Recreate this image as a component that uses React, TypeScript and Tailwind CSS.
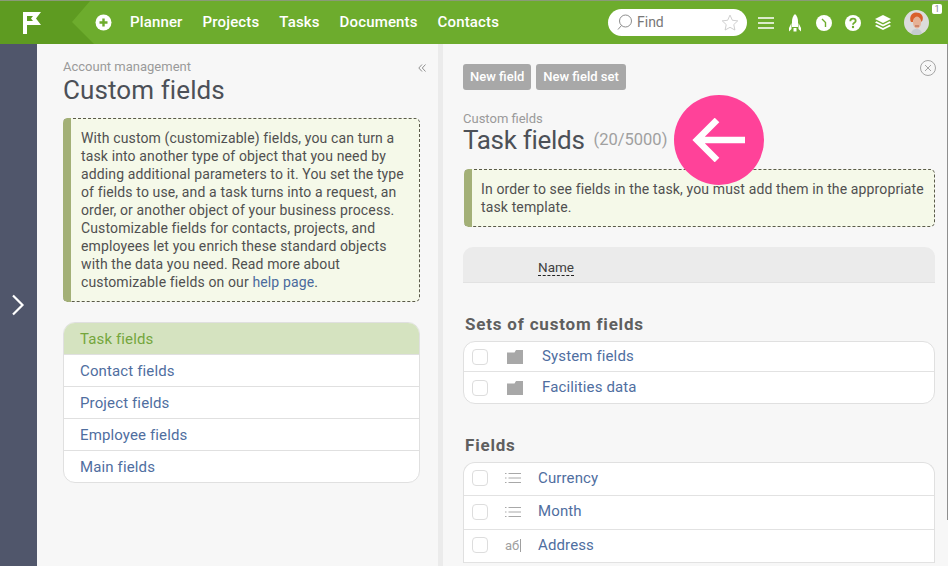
const F = "font-['Roboto',sans-serif]";

function Check() {
  return <span className="w-4 h-4 rounded-[4px] border border-[#dddddd] bg-white shrink-0" />;
}

function ListIcon() {
  return (
    <svg width="16" height="12" viewBox="0 0 16 12" className="shrink-0">
      <g stroke="#a8a8a8" strokeWidth="1" fill="none">
        <path d="M0 1.5h1.5M0 6h1.5M0 10.5h1.5" />
        <path d="M3.5 1.5H16M3.5 6H16M3.5 10.5H16" />
      </g>
    </svg>
  );
}

function FolderIcon() {
  return (
    <svg width="16" height="14" viewBox="0 0 16 14" className="shrink-0">
      <path d="M0 2.5 L0 14 L16 14 L16 0 L9 0 L7.5 2.5 Z" fill="#a8a8a8" />
    </svg>
  );
}

function Notice({ className, children }: { className: string; children: React.ReactNode }) {
  return (
    <div className={`relative rounded-[5px] border border-dashed border-[#5a5a4a] border-l-0 bg-[#f5f9e9] text-[#505050] text-[14px] leading-[18px] tracking-[0.13px] ${className}`}>
      <span className="absolute -left-0 -top-px -bottom-px w-2 rounded-l-[5px] bg-[#a3b077]" />
      {children}
    </div>
  );
}

function Nav() {
  return (
    <header className="h-11 shrink-0 flex items-center bg-[#6dac2d] border-t border-[#8a9a78] text-white relative">
      <div className="absolute left-0 top-0 h-full w-[94px] bg-[#5e9b21] [clip-path:polygon(0_0,90px_0,72px_21px,94px_100%,0_100%)]" />
      <div className="relative w-[94px] shrink-0 h-full flex items-center pl-[22px]">
        <svg width="20" height="24" viewBox="0 0 20 24">
          <path d="M1 1h18l-5 6.5 5 6.5H5v9H1z M5 5v5h6l-2-2.5L11 5z" fill="#fff" fillRule="evenodd" />
        </svg>
      </div>
      <svg width="17" height="17" viewBox="0 0 17 17" className="relative shrink-0 ml-[1px]">
        <circle cx="8.5" cy="8.5" r="8" fill="#fff" />
        <path d="M8.5 4.5v8M4.5 8.5h8" stroke="#6dac2d" strokeWidth="2.4" />
      </svg>
      <nav className="relative flex items-center gap-5 ml-[18px] text-[15px] font-medium tracking-[0.15px]">
        <span>Planner</span>
        <span>Projects</span>
        <span>Tasks</span>
        <span>Documents</span>
        <span>Contacts</span>
      </nav>
      <div className="relative ml-auto w-[139px] h-[27px] bg-white rounded-full flex items-center pl-[9px] pr-[8px] shrink-0">
        <svg width="15" height="17" viewBox="0 0 15 17" fill="none" stroke="#8d8d8d">
          <circle cx="8.5" cy="7" r="6" />
          <path d="M4.5 11.5L1 15.5" />
        </svg>
        <span className="ml-[5px] text-[14px] text-[#777777]">Find</span>
        <svg width="18" height="17" viewBox="0 0 24 23" fill="none" stroke="#c9c9c9" strokeWidth="1.2" className="ml-auto">
          <path d="M12 1.5l3.2 7 7.3.8-5.4 5 1.5 7.4L12 18l-6.6 3.7 1.5-7.4-5.4-5 7.3-.8z" />
        </svg>
      </div>
      <div className="relative flex items-center ml-[11px] mr-[6px] shrink-0">
        <svg width="16" height="12" viewBox="0 0 16 12" className="mr-[14px]">
          <path d="M0 1h16M0 6h16M0 11h16" stroke="#fff" strokeWidth="1.6" />
        </svg>
        <svg width="14" height="18" viewBox="0 0 14 18" className="mr-[14px]" fill="#fff">
          <path d="M7 0c2 2 3 4.500 3 7v6H4V7c0-2.500 1-5 3-7z" />
          <path d="M3.500 9L1 14v3.500l2.500-2.500zM10.500 9L13 14v3.500L10.500 15z" />
          <path d="M5.500 14h3v3.500h-3z" />
        </svg>
        <svg width="16" height="16" viewBox="0 0 16 16" className="mr-[13px]">
          <circle cx="8" cy="8" r="8" fill="#fff" />
          <path d="M6 4l3.500 3.500L9.500 12" stroke="#6dac2d" strokeWidth="1.4" fill="none" />
        </svg>
        <svg width="16" height="16" viewBox="0 0 16 16" className="mr-[14px]">
          <circle cx="8" cy="8" r="8" fill="#fff" />
          <path d="M5.300 6.200C5.300 4.700 6.500 3.700 8 3.700s2.700 1 2.700 2.300c0 1.800-2.700 1.900-2.700 3.700" stroke="#6dac2d" strokeWidth="1.800" fill="none" />
          <circle cx="8" cy="12" r="1.200" fill="#6dac2d" />
        </svg>
        <svg width="16" height="15" viewBox="0 0 16 15" className="mr-[13px]" fill="#fff">
          <path d="M8 0l8 4-8 4-8-4z" />
          <path d="M1.500 6.300L8 9.500l6.500-3.200L16 7.500 8 11.500 0 7.500z" />
          <path d="M1.500 9.800L8 13l6.500-3.200L16 11l-8 4-8-4z" />
        </svg>
        <div className="relative w-[25px] h-[25px] rounded-full bg-[#dcdcdc] overflow-hidden mr-[13px] shrink-0">
          <svg width="25" height="25" viewBox="0 0 25 25">
            <path d="M7 25c0-5 3-6 5.500-6s5.500 1 5.500 6z" fill="#c5ccd0" />
            <path d="M7 12C5 8 7 2.500 12 2.500S20 6 18.500 10.500L17 12c0-3-2-4-4-4s-4 1-4 4z" fill="#d9602a" />
            <ellipse cx="13" cy="12.500" rx="4" ry="6" fill="#e6b195" />
            <path d="M11 16h4" stroke="#b5583c" strokeWidth="1" />
          </svg>
        </div>
        <span className="absolute right-0 -top-[6px] w-[10px] h-[10px] bg-white rounded-[2px] text-[9px] leading-[10px] text-center text-[#888888]">1</span>
      </div>
    </header>
  );
}

const leftItems = ["Contact fields", "Project fields", "Employee fields", "Main fields"];

function LeftPanel() {
  return (
    <section className="relative w-[401px] shrink-0 pl-[26px] pr-[18px] pt-[15px]">
      <svg width="8" height="8" viewBox="0 0 8 8" fill="none" stroke="#8f8f8f" className="absolute left-[381px] top-[20px]">
        <path d="M4 .5L.8 4 4 7.500M7.500 .5L4.300 4l3.200 3.500" />
      </svg>
      <div className="text-[13px] leading-4 text-[#9a9a9a]">Account management</div>
      <h1 className="text-[26px] leading-[30px] font-normal text-[#4c5057] tracking-[0.1px]">Custom fields</h1>
      <Notice className="mt-[13px] h-[184px] pl-[18px] pt-[10px]">
        With custom (customizable) fields, you can turn a<br />
        task into another type of object that you need by<br />
        adding additional parameters to it. You set the type<br />
        of fields to use, and a task turns into a request, an<br />
        order, or another object of your business process.<br />
        Customizable fields for contacts, projects, and<br />
        employees let you enrich these standard objects<br />
        with the data you need. Read more about<br />
        customizable fields on our <span className="text-[#4a6a9c]">help page</span>.
      </Notice>
      <div className="mt-5 rounded-[12px] border border-[#e0e0e0] bg-white overflow-hidden text-[15px] tracking-[0.13px]">
        <div className="h-[31px] flex items-center pl-4 pt-[2px] bg-[#d5e3c0] text-[#74a63c]">Task fields</div>
        {leftItems.map((t) => (
          <div key={t} className="h-8 flex items-center pl-4 pt-[2px] border-t border-[#e0e0e0] text-[#4f6e9f]">
            {t}
          </div>
        ))}
      </div>
    </section>
  );
}

function Row({ icon, label, iconGap, gap, h }: { icon: React.ReactNode; label: string; iconGap: string; gap: string; h: string }) {
  return (
    <div className={`flex items-center pl-2 border-b border-[#e2e2e2] last:border-b-0 ${h}`}>
      <Check />
      <span className={`w-4 flex justify-center shrink-0 ${iconGap}`}>{icon}</span>
      <span className={`text-[15px] tracking-[0.13px] text-[#4f6e9f] ${gap}`}>{label}</span>
    </div>
  );
}

function RightPanel() {
  return (
    <section className="relative flex-1 pl-5 pr-3 pt-5 min-w-0">
      <svg width="16" height="16" viewBox="0 0 16 16" fill="none" stroke="#a5a5a5" className="absolute left-[477px] top-[16px]">
        <circle cx="8" cy="8" r="7.500" />
        <path d="M5 5l6 6M11 5l-6 6" />
      </svg>
      <div className="flex gap-[5px]">
        {["New field", "New field set"].map((t) => (
          <span key={t} className="h-[26px] px-[7px] flex items-center rounded-[3px] bg-[#a8a8a8] text-white text-[13px] font-medium">{t}</span>
        ))}
      </div>
      <div className="mt-[21px] text-[13px] leading-4 text-[#9a9a9a]">Custom fields</div>
      <div className="flex items-center h-[26px]">
        <h2 className="text-[26px] leading-[26px] font-normal text-[#4c5057] tracking-[-0.3px]">Task fields</h2>
        <span className="ml-[9px] text-[16.5px] text-[#a0a0a0]">(20/5000)</span>
      </div>
      <Notice className="ml-px mt-[16px] h-[58px] pl-[17px] pt-[10px]">
        In order to see fields in the task, you must add them in the appropriate<br />
        task template.
      </Notice>
      <div className="mt-5 h-[36px] bg-[#ebebeb] rounded-t-[10px] border-b border-[#e2e2e2] flex items-end pb-[6px] pl-[75px]">
        <span className="text-[13.5px] leading-4 text-[#404040] border-b border-dashed border-[#222222]">Name</span>
      </div>
      <h3 className="mt-[31px] ml-[2px] text-[17px] tracking-[0.8px] leading-5 font-bold text-[#5f5f5f]">Sets of custom fields</h3>
      <div className="mt-[7px] rounded-[12px] border border-[#e0e0e0] bg-white">
        <Row icon={<FolderIcon />} label="System fields" iconGap="ml-[19px]" gap="ml-[19px]" h="h-[30px]" />
        <Row icon={<FolderIcon />} label="Facilities data" iconGap="ml-[19px]" gap="ml-[19px]" h="h-[31px]" />
      </div>
      <h3 className="mt-[31px] ml-[2px] text-[17px] tracking-[0.8px] leading-5 font-bold text-[#5f5f5f]">Fields</h3>
      <div className="mt-[7px] rounded-t-[12px] border border-[#e0e0e0] border-b-0 bg-white">
        <Row icon={<ListIcon />} label="Currency" iconGap="ml-[17px]" gap="ml-[17px]" h="h-[33px] pb-[2px] last:border-b" />
        <Row icon={<ListIcon />} label="Month" iconGap="ml-[17px]" gap="ml-[17px]" h="h-[34px] pb-[2px] last:border-b" />
        <Row
          icon={<span className="text-[13px] text-[#a0a0a0] leading-none border-r border-[#a0a0a0] pr-px">аб</span>}
          label="Address"
          iconGap="ml-[17px]"
          gap="ml-[17px]"
          h="h-[33px] pb-[2px] !border-b"
        />
      </div>
    </section>
  );
}

export default function App() {
  return (
    <div className={`relative w-[948px] h-[566px] overflow-hidden flex flex-col bg-[#f7f7f7] ${F}`}>
      <Nav />
      <main className="flex-1 flex min-h-0">
        <aside className="w-[37px] shrink-0 bg-[#50566b] flex items-center justify-center pb-[2px] pr-[2px]">
          <svg width="14" height="22" viewBox="0 0 14 22" fill="none" stroke="#fff" strokeWidth="2.200" className="mt-[1px]">
            <path d="M2 1.500l9.500 9.500L2 20.500" />
          </svg>
        </aside>
        <LeftPanel />
        <div className="w-[5px] shrink-0 bg-[#ebebeb]" />
        <RightPanel />
        <div className="w-px shrink-0 self-start h-[476px] bg-[#8f8f8f]" />
      </main>
      <div className="absolute left-[674px] top-[95px] w-[90px] h-[90px] rounded-full bg-[#ff4299] flex items-center justify-center">
        <svg width="54" height="44" viewBox="0 0 54 44" fill="none" stroke="#fff" strokeWidth="6.500">
          <path d="M53 22H4M25 2L5 22l20 20" />
        </svg>
      </div>
    </div>
  );
}
